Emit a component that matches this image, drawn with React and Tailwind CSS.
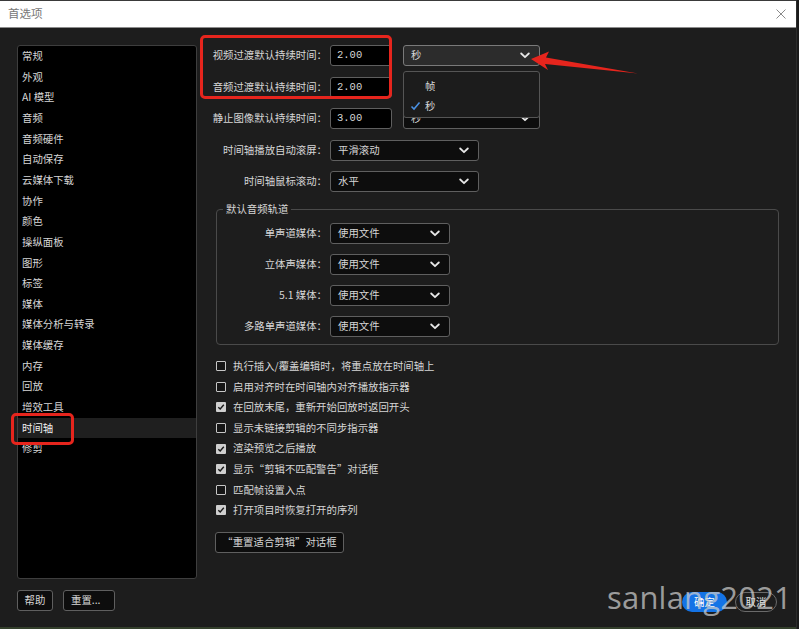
import React from 'react';

const Chevron = ({ className = '' }) => (
  <svg width="10" height="7" viewBox="0 0 10 7" className={className}>
    <path d="M1.2 1.5 L5 5.2 L8.8 1.5" fill="none" stroke="#e6e6e6" strokeWidth="1.8" strokeLinecap="round" strokeLinejoin="round" />
  </svg>
);

const Select = ({ value, width, bg = 'bg-[#0d0d0d]' }) => (
  <div className={`flex items-center justify-between h-[21px] ${width} ${bg} border border-[#5f5f5f] rounded-[3px] pl-[7px] pr-[9px]`}>
    <span>{value}</span>
    <Chevron />
  </div>
);

const NumBox = ({ value }) => (
  <div className="flex items-center h-[21px] w-[62px] bg-black border border-[#5f5f5f] rounded-[3px] pl-[6px] font-['Liberation_Mono',monospace] text-[10.5px] text-[#d8d8d8]">
    {value}
  </div>
);

const Checkbox = ({ checked }) =>
  checked ? (
    <span className="flex items-center justify-center w-[10px] h-[10px] bg-[#cfcfcf] rounded-[1px]">
      <svg width="8" height="8" viewBox="0 0 8 8">
        <path d="M1.3 4.2 L3.2 6 L6.8 1.8" fill="none" stroke="#1a1a1a" strokeWidth="1.4" />
      </svg>
    </span>
  ) : (
    <span className="w-[10px] h-[10px] border-[1.5px] border-[#c6c6c6] bg-[#161616] rounded-[1px]" />
  );

const navItems = [
  '常规', '外观', 'AI 模型', '音频', '音频硬件', '自动保存', '云媒体下载', '协作', '颜色', '操纵面板',
  '图形', '标签', '媒体', '媒体分析与转录', '媒体缓存', '内存', '回放', '增效工具', '时间轴', '修剪',
];

const checks = [
  ['执行插入/覆盖编辑时，将重点放在时间轴上', false],
  ['启用对齐时在时间轴内对齐播放指示器', false],
  ['在回放末尾，重新开始回放时返回开头', true],
  ['显示未链接剪辑的不同步指示器', false],
  ['渲染预览之后播放', true],
  ['显示“剪辑不匹配警告”对话框', true],
  ['匹配帧设置入点', false],
  ['打开项目时恢复打开的序列', true],
];

const Label = ({ children }) => (
  <div className="flex justify-end w-[116px] whitespace-nowrap">{children}</div>
);

export default function App() {
  return (
    <div className="relative w-[799px] h-[629px] overflow-hidden flex bg-[#1d1d1d] font-['Noto_Sans_CJK_SC',sans-serif] text-[10.4px] leading-none text-[#d6d6d6]">
      <div className="flex flex-col w-[796px]">
        {/* title bar */}
        <div className="flex items-center justify-between h-[28px] bg-white border-t border-[#3a3a3a] border-b border-b-[#8c8c8c] pl-[8px] pr-[10px]">
          <span className="text-[11.5px] text-[#777]">首选项</span>
          <svg width="10" height="10" viewBox="0 0 10 10">
            <path d="M0.5 0.5 L9.5 9.5 M9.5 0.5 L0.5 9.5" stroke="#8a8a8a" strokeWidth="1" />
          </svg>
        </div>

        <div className="flex flex-1">
          {/* left column */}
          <div className="flex flex-col pl-[17px] pt-[17px] w-[197px] shrink-0">
            <div className="h-[534px] w-[180px] bg-black border border-[#3e3e3e] rounded-[3px]">
              {navItems.map((item) => (
                <div
                  key={item}
                  className={`flex items-center h-[20.65px] pl-[4px] ${item === '时间轴' ? 'bg-[#1f1f1f] text-[#f0f0f0]' : ''}`}
                >
                  {item}
                </div>
              ))}
            </div>
            <div className="flex gap-[10px] mt-[11px]">
              <div className="flex items-center justify-center h-[21px] w-[36px] bg-[#0d0d0d] border border-[#5f5f5f] rounded-[3px]">帮助</div>
              <div className="flex items-center h-[21px] w-[52px] bg-[#0d0d0d] border border-[#5f5f5f] rounded-[3px] pl-[7px]">重置...</div>
            </div>
          </div>

          {/* right column */}
          <div className="flex flex-col pl-[14px] pt-[17px] flex-1">
            <div className="flex items-center h-[21px]">
              <Label>视频过渡默认持续时间：</Label>
              <div className="ml-[3px]"><NumBox value="2.00" /></div>
              <div className="relative ml-[11px]">
                <Select value="秒" width="w-[137px]" bg="bg-[#2c2c2c] border-[#7a7a7a]" />
                <div className="absolute left-0 top-[26px] w-[137px] h-[47px] bg-[#1c1c1c] border border-[#555] rounded-[3px] pt-[4px] z-10">
                  <div className="flex items-center h-[20px] pl-[21px]">帧</div>
                  <div className="flex items-center h-[20px] pl-[6px]">
                    <svg width="11" height="10" viewBox="0 0 11 10" className="mr-[4px]">
                      <path d="M1.5 5.5 L4 8 L9.5 1.5" fill="none" stroke="#4a90e2" strokeWidth="1.6" />
                    </svg>
                    秒
                  </div>
                </div>
              </div>
            </div>
            <div className="flex items-center h-[21px] mt-[11px]">
              <Label>音频过渡默认持续时间：</Label>
              <div className="ml-[3px]"><NumBox value="2.00" /></div>
            </div>
            <div className="flex items-center h-[21px] mt-[10px]">
              <Label>静止图像默认持续时间：</Label>
              <div className="ml-[3px]"><NumBox value="3.00" /></div>
              <div className="ml-[11px]"><Select value="秒" width="w-[137px]" /></div>
            </div>
            <div className="flex items-center h-[21px] mt-[11px]">
              <Label>时间轴播放自动滚屏：</Label>
              <div className="ml-[3px]"><Select value="平滑滚动" width="w-[149px]" /></div>
            </div>
            <div className="flex items-center h-[21px] mt-[10px]">
              <Label>时间轴鼠标滚动：</Label>
              <div className="ml-[3px]"><Select value="水平" width="w-[149px]" /></div>
            </div>

            {/* group box */}
            <div className="relative ml-[5px] mt-[17px] w-[563px] border border-[#4a4a4a] rounded-[4px] pt-[13px] pb-[7px]">
              <span className="absolute left-[6px] top-[-6px] px-[3px] bg-[#1d1d1d]">默认音频轨道</span>
              {['单声道媒体：', '立体声媒体：', '5.1 媒体：', '多路单声道媒体：'].map((l, i) => (
                <div key={l} className={`flex items-center h-[21px] ${i ? 'mt-[10px]' : ''}`}>
                  <div className="flex justify-end w-[110px] whitespace-nowrap">{l}</div>
                  <div className="ml-[3px]"><Select value="使用文件" width="w-[120px]" /></div>
                </div>
              ))}
            </div>

            <div className="flex flex-col mt-[11px] ml-[5px]">
              {checks.map(([t, c]) => (
                <div key={t} className="flex items-center h-[20.6px] gap-[7px]">
                  <Checkbox checked={c} />
                  <span>{t}</span>
                </div>
              ))}
            </div>

            <div className="flex items-center justify-center mt-[11px] ml-[4px] h-[21px] w-[129px] bg-[#0d0d0d] border border-[#5f5f5f] rounded-[3px]">
              “重置适合剪辑”对话框
            </div>

            <div className="flex justify-end gap-[8px] mt-[39px] pr-[19px]">
              <div className="flex items-center justify-center h-[20px] w-[45px] rounded-full bg-[#1473e6] text-white">确定</div>
              <div className="flex items-center justify-center h-[20px] w-[42px] rounded-full border border-[#6a6a6a] text-[#e8e8e8]">取消</div>
            </div>
          </div>
        </div>
        <div className="h-[2px] bg-[#34402c]" />
      </div>
      <div className="w-[3px] border-l border-[#2c2c2c] bg-[#1a1a1a]" />

      {/* annotations */}
      <div className="absolute left-[200px] top-[35px] w-[192px] h-[64px] border-[3.5px] border-[#e6251d] rounded-[5px] pointer-events-none" />
      <div className="absolute left-[11px] top-[413px] w-[63px] h-[32px] border-[3.5px] border-[#e6251d] rounded-[5px] pointer-events-none" />
      <svg className="absolute left-0 top-0 pointer-events-none" width="799" height="629">
        <path d="M531 59 L549 51.5 L546 57.5 L638 73.5 L545 64 L548 70 Z" fill="#e6251d" />
      </svg>
      <div className="absolute left-[607px] top-[582px] font-['Open_Sans',sans-serif] text-[31px] leading-none tracking-[0.2px] text-[rgba(205,205,205,0.72)] pointer-events-none">
        sanlang2021
      </div>
    </div>
  );
}
